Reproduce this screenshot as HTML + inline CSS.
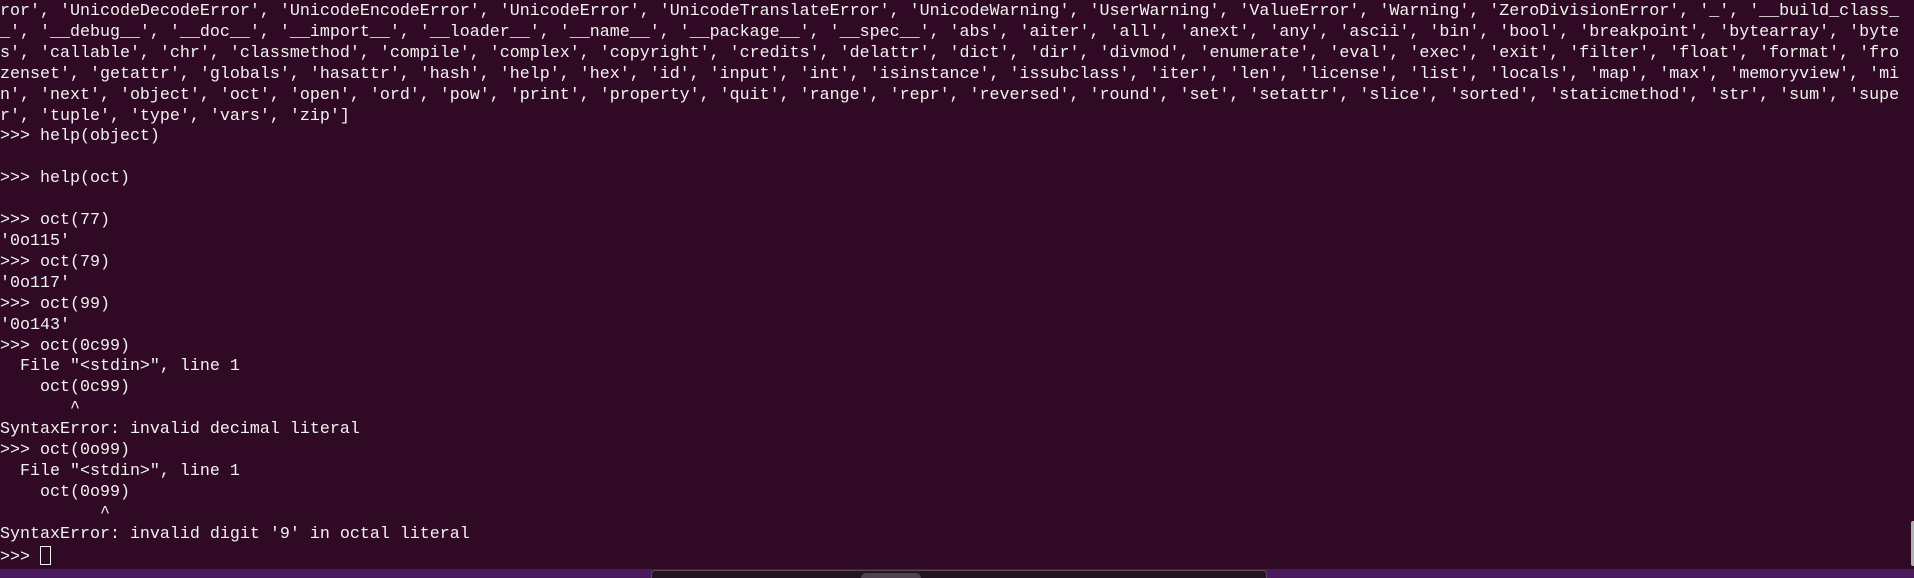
<!DOCTYPE html>
<html><head><meta charset="utf-8"><style>
html,body{margin:0;padding:0;}
body{width:1914px;height:578px;background:#300a24;overflow:hidden;position:relative;}
pre{margin:0;position:absolute;left:0;top:2px;font-family:"Liberation Mono",monospace;font-size:16.67px;line-height:20.9px;color:#f2f2f0;white-space:pre;}
.cur{display:inline-block;width:11px;height:19px;border:1.5px solid #f2f2f0;box-sizing:border-box;vertical-align:-4px;}
.bar{position:absolute;left:0;top:569px;width:1914px;height:9px;background:#4a1a5e;}
.panel{position:absolute;left:651px;top:570px;width:616px;height:8px;background:#221520;border-radius:4px 4px 0 0;border:1px solid #5a4a5a;border-bottom:none;box-sizing:border-box;}
.knob{position:absolute;left:861px;top:573px;width:60px;height:5px;background:#4d424d;border-radius:5px 5px 0 0;}
.sb{position:absolute;left:1911px;top:521px;width:3px;height:45px;background:#b0b0b0;border-radius:2px 0 0 2px;}
</style></head><body>
<pre>ror', 'UnicodeDecodeError', 'UnicodeEncodeError', 'UnicodeError', 'UnicodeTranslateError', 'UnicodeWarning', 'UserWarning', 'ValueError', 'Warning', 'ZeroDivisionError', '_', '__build_class_
_', '__debug__', '__doc__', '__import__', '__loader__', '__name__', '__package__', '__spec__', 'abs', 'aiter', 'all', 'anext', 'any', 'ascii', 'bin', 'bool', 'breakpoint', 'bytearray', 'byte
s', 'callable', 'chr', 'classmethod', 'compile', 'complex', 'copyright', 'credits', 'delattr', 'dict', 'dir', 'divmod', 'enumerate', 'eval', 'exec', 'exit', 'filter', 'float', 'format', 'fro
zenset', 'getattr', 'globals', 'hasattr', 'hash', 'help', 'hex', 'id', 'input', 'int', 'isinstance', 'issubclass', 'iter', 'len', 'license', 'list', 'locals', 'map', 'max', 'memoryview', 'mi
n', 'next', 'object', 'oct', 'open', 'ord', 'pow', 'print', 'property', 'quit', 'range', 'repr', 'reversed', 'round', 'set', 'setattr', 'slice', 'sorted', 'staticmethod', 'str', 'sum', 'supe
r', 'tuple', 'type', 'vars', 'zip']
&gt;&gt;&gt; help(object)

&gt;&gt;&gt; help(oct)

&gt;&gt;&gt; oct(77)
'0o115'
&gt;&gt;&gt; oct(79)
'0o117'
&gt;&gt;&gt; oct(99)
'0o143'
&gt;&gt;&gt; oct(0c99)
  File "&lt;stdin&gt;", line 1
    oct(0c99)
       ^
SyntaxError: invalid decimal literal
&gt;&gt;&gt; oct(0o99)
  File "&lt;stdin&gt;", line 1
    oct(0o99)
          ^
SyntaxError: invalid digit '9' in octal literal
&gt;&gt;&gt; <span class="cur"></span></pre>
<div class="sb"></div>
<div class="bar"></div>
<div class="panel"></div>
<div class="knob"></div>
</body></html>
